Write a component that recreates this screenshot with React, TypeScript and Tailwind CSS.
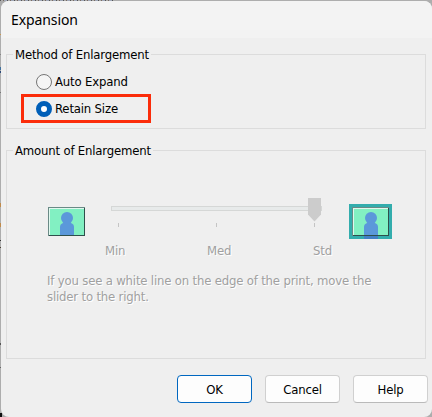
import type { ReactNode } from "react";
import clsx from "clsx";

function Portrait({ framed = false }: { framed?: boolean }) {
  return (
    <svg
      width="43"
      height="35"
      viewBox="0 0 43 35"
      shapeRendering="crispEdges"
      className="block shrink-0"
    >
      {framed && <rect width="43" height="35" fill="#33adad" />}
      <rect x="3" y="3" width="37" height="29" fill="#2f4f4b" />
      <path d="M3 3h37v1H4v28H3z" fill="#6a8a86" />
      <rect x="4" y="4" width="35" height="27" fill="#dff8ee" />
      <rect x="5" y="5" width="34" height="26" fill="#82f0c2" />
      <g shapeRendering="auto" fill="#5b98da">
        <circle cx="22" cy="14" r="6" />
        <path d="M15 31v-8q0-3 3-4h8q3 1 3 4v8z" />
      </g>
      {framed && <rect x="15" y="32" width="14" height="3" fill="#4380c6" />}
    </svg>
  );
}

function Group({ title, className, children }: { title: string; className?: string; children: ReactNode }) {
  return (
    <fieldset className={clsx("w-[420px] border border-[#dcdcdc]", className)}>
      <legend className="ml-[6px] h-[17px] whitespace-nowrap px-[2px] leading-[17px]">
        {title}
      </legend>
      {children}
    </fieldset>
  );
}

function Radio({ label, checked = false }: { label: string; checked?: boolean }) {
  return (
    <label className="flex h-4 items-center gap-[3px] whitespace-nowrap">
      <span
        className={clsx(
          "size-4 shrink-0 rounded-full",
          checked ? "border-[5px] border-[#005fb8] bg-white" : "border border-[#767676] bg-[#f5f5f5]"
        )}
      />
      <span className="leading-4">{label}</span>
    </label>
  );
}

function Slider() {
  return (
    <div className="mt-[-6px] w-[236px] shrink-0">
      <div className="relative ml-[9px] mt-[8px] h-[5px] w-[211px] border border-[#d5d7d6] bg-[#e7eaea]">
        <svg width="13" height="24" viewBox="0 0 13 24" className="absolute -top-[9px] left-[196px]">
          <path d="M0 0h13v16.5L6.5 23.5 0 16.5z" fill="#cccccc" />
        </svg>
      </div>
      <div className="ml-4 mt-3 flex w-[197px] justify-between">
        <span className="h-1 w-px bg-[#c4c4c4]" />
        <span className="h-1 w-px bg-[#c4c4c4]" />
        <span className="h-1 w-px bg-[#c4c4c4]" />
      </div>
      <div className="mt-4 flex text-[#a0a0a0] [text-shadow:1px_1px_0_#fff]">
        <span className="ml-[3px] w-[102px] leading-4">Min</span>
        <span className="w-[106px] leading-4">Med</span>
        <span className="leading-4">Std</span>
      </div>
    </div>
  );
}

function Button({ label, primary = false }: { label: string; primary?: boolean }) {
  return (
    <button
      className={clsx(
        "h-7 w-[75px] rounded-[4px] border bg-[#fdfdfd] pt-px leading-4 tracking-[-0.2px]",
        primary ? "border-[#0067c0]" : "border-[#d0d0d0] border-b-[#bababa]"
      )}
    >
      {label}
    </button>
  );
}

// bits of the window behind that show past the dialog's left edge
const specks = [
  { y: 34, h: 1, color: "#c9974f" },
  { y: 54, h: 1, color: "#858585" },
  { y: 67, h: 3, color: "#3f6f9c" },
  { y: 71, h: 2, color: "#2c4a78" },
  { y: 92, h: 1, color: "#777777" },
  { y: 203, h: 4, color: "#c08a4a" },
  { y: 223, h: 4, color: "#c08a4a" },
  { y: 240, h: 1, color: "#333333" },
  { y: 247, h: 1, color: "#4a4030" },
  { y: 343, h: 2, color: "#555555" },
  { y: 367, h: 1, color: "#666666" },
  { y: 413, h: 4, color: "#111111" },
];

export default function App() {
  return (
    <div className="relative h-[417px] w-[432px] overflow-hidden bg-[#adadad] pl-px pt-px">
      {specks.map((s) => (
        <span
          key={s.y}
          className="absolute left-0 w-[2px]"
          style={{ top: s.y, height: s.h, background: s.color }}
        />
      ))}
      <span className="absolute left-0 top-0 h-px w-[115px] bg-[repeating-linear-gradient(90deg,#555_0_1px,#adadad_1px_3px,#7a6a60_3px_4px,#a0a8b8_4px_7px)]" />

      <div className="relative h-[416px] w-[431px] overflow-hidden rounded-lg bg-[#efefef] text-[13px] tracking-[-0.18px] text-black [font-family:'DejaVu_Sans_Condensed','DejaVu_Sans',sans-serif] [font-stretch:condensed]">
        <header className="flex h-[37px] items-center bg-[#f3f3f3] pl-[10px] text-[14px] tracking-[-0.1px] [font-family:'Noto_Sans','Open_Sans',sans-serif] [font-stretch:normal]">
          Expansion
        </header>

        <main className="px-[5px] pt-2">
          <Group title="Method of Enlargement" className="h-[83px]">
            <div className="ml-[29px] mt-[11px]">
              <Radio label="Auto Expand" />
            </div>
            <div className="ml-[14px] mt-1 flex h-[29px] w-[130px] items-center border-[3px] border-[#fb2c0a] pl-3">
              <Radio label="Retain Size" checked />
            </div>
          </Group>

          <Group title="Amount of Enlargement" className="mt-[13px] h-[217px]">
            <div className="mt-[45px] flex h-[60px] items-start">
              <div className="ml-[38px] w-[57px]">
                <Portrait />
              </div>
              <Slider />
              <div className="ml-[11px]">
                <Portrait framed />
              </div>
            </div>
            <p className="ml-10 mt-[9px] w-[345px] leading-4 text-[#a0a0a0] [text-shadow:1px_1px_0_#fff]">
              If you see a white line on the edge of the print, move the
              <br />
              slider to the right.
            </p>
          </Group>

          <footer className="mr-[-1px] mt-4 flex justify-end gap-[13px]">
            <Button label="OK" primary />
            <Button label="Cancel" />
            <Button label="Help" />
          </footer>
        </main>
      </div>
    </div>
  );
}
